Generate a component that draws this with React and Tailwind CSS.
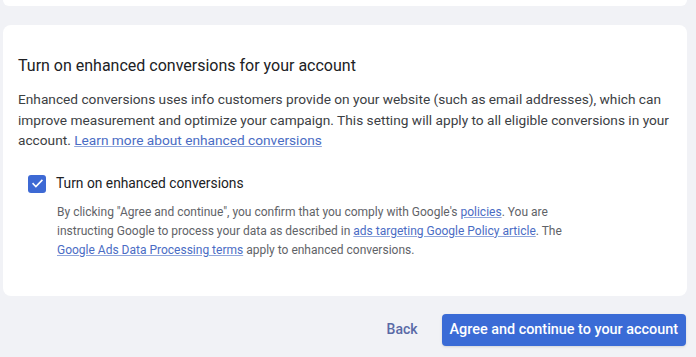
import React from 'react';

function App() {
  return (
    <div
      className="h-[357px] w-[696px] bg-[#f1f2f6] pl-[3px] pr-[9px] overflow-hidden"
      style={{ fontFamily: 'Roboto, "Liberation Sans", sans-serif' }}
    >
      {/* bottom of the previous card */}
      <div className="h-[6px] bg-white rounded-b-lg" />

      <div className="mt-[19px] bg-white rounded-lg pl-[15px] pr-[10px] pt-[29px] pb-[36px]">
        <h2 className="text-[16px] leading-6 text-[#202124]">
          Turn on enhanced conversions for your account
        </h2>
        <p className="mt-[11px] text-[13.7px] leading-[20.5px] text-[#3c4043] whitespace-nowrap">
          Enhanced conversions uses info customers provide on your website (such as email addresses), which can
          <br />
          improve measurement and optimize your campaign. This setting will apply to all eligible conversions in your
          <br />
          account.{' '}
          <a href="#" className="text-[#4a6cc4] underline underline-offset-1 decoration-[#8fa6dc]">
            Learn more about enhanced conversions
          </a>
        </p>

        <label className="mt-[23px] ml-[10px] flex items-center gap-[10px] h-5">
          <span className="w-[18px] h-[18px] rounded-[3px] bg-[#3d69d4] flex items-center justify-center">
            <svg width="13" height="13" viewBox="0 0 24 24" fill="none">
              <path d="M4 12.5l5 5L20 6.5" stroke="white" strokeWidth="3" strokeLinecap="square" />
            </svg>
          </span>
          <span className="text-[13.8px] text-[#202124]">Turn on enhanced conversions</span>
        </label>

        <p className="mt-[9px] ml-[39px] text-[12px] leading-[19px] text-[#5f6368] whitespace-nowrap">
          By clicking "Agree and continue", you confirm that you comply with Google's{' '}
          <a href="#" className="text-[#4a6cc4] underline underline-offset-1 decoration-[#8fa6dc]">policies</a>. You are
          <br />
          instructing Google to process your data as described in{' '}
          <a href="#" className="text-[#4a6cc4] underline underline-offset-1 decoration-[#8fa6dc]">
            ads targeting Google Policy article
          </a>
          . The
          <br />
          <a href="#" className="text-[#4a6cc4] underline underline-offset-1 decoration-[#8fa6dc]">
            Google Ads Data Processing terms
          </a>{' '}
          apply to enhanced conversions.
        </p>
      </div>

      <div className="mt-[18px] flex items-center justify-end gap-[24px] pr-[1px]">
        <button className="text-[14px] font-medium text-[#5a6aa6]">Back</button>
        <button className="h-8 px-[8px] rounded-[4px] bg-[#3a6bd6] text-white text-[14.4px] font-medium shadow-sm">
          Agree and continue to your account
        </button>
      </div>
    </div>
  );
}

export default App;
